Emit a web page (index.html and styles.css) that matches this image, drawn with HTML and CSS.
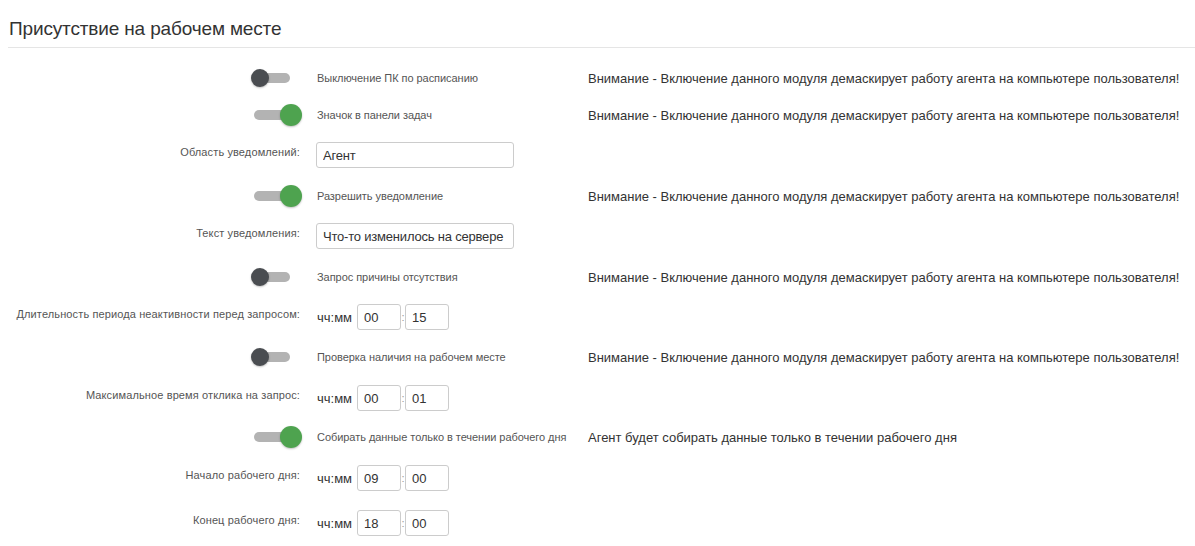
FILE: index.html
```html
<!DOCTYPE html>
<html lang="ru">
<head>
<meta charset="utf-8">
<link rel="stylesheet" href="styles.css">
</head>
<body>
<div class="page">
  <h2 class="title">Присутствие на рабочем месте</h2>
  <div class="rule"></div>
  <div class="form">
    <div class="row">
      <div class="lab"><span class="switch"><span class="track"></span><span class="knob"></span></span></div>
      <div class="ctl"><span class="swlabel">Выключение ПК по расписанию</span></div>
      <div class="note">Внимание - Включение данного модуля демаскирует работу агента на компьютере пользователя!</div>
    </div>
    <div class="row g11">
      <div class="lab"><span class="switch on"><span class="track"></span><span class="knob"></span></span></div>
      <div class="ctl"><span class="swlabel">Значок в панели задач</span></div>
      <div class="note">Внимание - Включение данного модуля демаскирует работу агента на компьютере пользователя!</div>
    </div>
    <div class="row">
      <div class="lab"><label class="flabel">Область уведомлений:</label></div>
      <div class="ctl"><input class="text" type="text" value="Агент"></div>
    </div>
    <div class="row g15">
      <div class="lab"><span class="switch on"><span class="track"></span><span class="knob"></span></span></div>
      <div class="ctl"><span class="swlabel">Разрешить уведомление</span></div>
      <div class="note">Внимание - Включение данного модуля демаскирует работу агента на компьютере пользователя!</div>
    </div>
    <div class="row">
      <div class="lab"><label class="flabel">Текст уведомления:</label></div>
      <div class="ctl"><input class="text" type="text" value="Что-то изменилось на сервере"></div>
    </div>
    <div class="row g15">
      <div class="lab"><span class="switch"><span class="track"></span><span class="knob"></span></span></div>
      <div class="ctl"><span class="swlabel">Запрос причины отсутствия</span></div>
      <div class="note">Внимание - Включение данного модуля демаскирует работу агента на компьютере пользователя!</div>
    </div>
    <div class="row">
      <div class="lab"><label class="flabel">Длительность периода неактивности перед запросом:</label></div>
      <div class="ctl time"><span class="unit">чч:мм</span><input class="num" type="text" value="00"><span class="colon">:</span><input class="num" type="text" value="15"></div>
    </div>
    <div class="row">
      <div class="lab"><span class="switch"><span class="track"></span><span class="knob"></span></span></div>
      <div class="ctl"><span class="swlabel">Проверка наличия на рабочем месте</span></div>
      <div class="note">Внимание - Включение данного модуля демаскирует работу агента на компьютере пользователя!</div>
    </div>
    <div class="row g15">
      <div class="lab"><label class="flabel">Максимальное время отклика на запрос:</label></div>
      <div class="ctl time"><span class="unit">чч:мм</span><input class="num" type="text" value="00"><span class="colon">:</span><input class="num" type="text" value="01"></div>
    </div>
    <div class="row g13">
      <div class="lab"><span class="switch on"><span class="track"></span><span class="knob"></span></span></div>
      <div class="ctl"><span class="swlabel">Собирать данные только в течении рабочего дня</span></div>
      <div class="note">Агент будет собирать данные только в течении рабочего дня</div>
    </div>
    <div class="row g15">
      <div class="lab"><label class="flabel">Начало рабочего дня:</label></div>
      <div class="ctl time"><span class="unit">чч:мм</span><input class="num" type="text" value="09"><span class="colon">:</span><input class="num" type="text" value="00"></div>
    </div>
    <div class="row g19">
      <div class="lab"><label class="flabel">Конец рабочего дня:</label></div>
      <div class="ctl time"><span class="unit">чч:мм</span><input class="num" type="text" value="18"><span class="colon">:</span><input class="num" type="text" value="00"></div>
    </div>
  </div>
</div>
</body>
</html>
```

FILE: styles.css
```css
html, body {
  margin: 0;
  padding: 0;
  background: #ffffff;
  font-family: "Liberation Sans", Arial, sans-serif;
  color: #333333;
}

.page {
  padding: 18px 0 0 8px;
  overflow: hidden;
}

.title {
  margin: 0 0 0 1px;
  font-size: 19px;
  line-height: 22px;
  font-weight: normal;
  letter-spacing: -0.15px;
  color: #333333;
}

.rule {
  margin-top: 7px;
  border-top: 1px solid #e5e5e5;
}

.form {
  display: flex;
  flex-direction: column;
  padding-top: 17px;
}

.row {
  display: grid;
  grid-template-columns: 292px 272px 1fr;
  column-gap: 0;
  height: 26px;
  margin-top: 14px;
}

.row:first-child { margin-top: 0; }
.row.g11 { margin-top: 11px; }
.row.g13 { margin-top: 13px; }
.row.g15 { margin-top: 15px; }
.row.g19 { margin-top: 19px; }

.lab {
  display: flex;
  justify-content: flex-end;
  align-items: flex-start;
}

.flabel {
  font-size: 11px;
  line-height: 15px;
  padding-top: 3px;
  letter-spacing: 0.12px;
  color: #555555;
  white-space: nowrap;
}

.ctl {
  display: flex;
  align-items: center;
  padding-left: 16px;
}

.swlabel {
  font-size: 11px;
  color: #555555;
  white-space: nowrap;
  padding-left: 1px;
  letter-spacing: -0.05px;
}

.note {
  display: flex;
  align-items: center;
  font-size: 13px;
  color: #333333;
  white-space: nowrap;
  padding-left: 16px;
}

/* switch */
.switch {
  position: relative;
  display: block;
  width: 52px;
  height: 26px;
  margin-right: -2px;
}

.switch .track {
  position: absolute;
  left: 4px;
  top: 8px;
  width: 36px;
  height: 10px;
  border-radius: 5px;
  background: #b3b3b3;
}

.switch .knob {
  position: absolute;
  left: 1px;
  top: 4px;
  width: 18px;
  height: 18px;
  border-radius: 50%;
  background: #4a4d51;
  box-shadow: 0 1px 2px rgba(0, 0, 0, 0.25);
}

.switch.on .knob {
  left: 30px;
  top: 2px;
  width: 22px;
  height: 22px;
  background: #4ea34f;
}

/* inputs */
.text {
  box-sizing: border-box;
  width: 198px;
  height: 26px;
  border: 1px solid #cccccc;
  border-radius: 3px;
  padding: 0 6px;
  margin: 0;
  font-family: "Liberation Sans", Arial, sans-serif;
  font-size: 13px;
  letter-spacing: -0.2px;
  color: #333333;
  background: #ffffff;
}

.unit {
  font-size: 13px;
  color: #333333;
  margin-left: 1px;
  margin-right: 5px;
}

.num {
  box-sizing: border-box;
  width: 44px;
  height: 26px;
  border: 1px solid #cccccc;
  border-radius: 3px;
  padding: 0 6px;
  margin: 0;
  font-family: "Liberation Sans", Arial, sans-serif;
  font-size: 13px;
  color: #333333;
  background: #ffffff;
}

.colon {
  width: 4px;
  text-align: center;
  font-size: 11px;
  color: #999999;
}
```
